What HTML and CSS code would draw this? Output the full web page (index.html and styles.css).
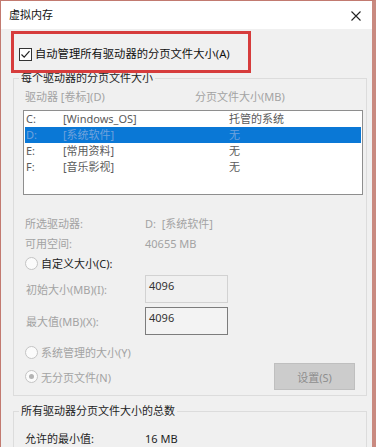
FILE: index.html
```html
<!DOCTYPE html>
<html lang="zh-CN">
<head>
    <meta charset="UTF-8">
    <title>虚拟内存</title>
    <link rel="stylesheet" href="styles.css">
</head>
<body>
    <div class="window">
        <div class="titlebar">
            <span class="title">虚拟内存</span>
            <svg class="close" width="10" height="10" viewBox="0 0 10 10">
                <path d="M0.5 0.5 L9.5 9.5 M9.5 0.5 L0.5 9.5" stroke="#222" stroke-width="1.1" fill="none"/>
            </svg>
        </div>
        <div class="content">
            <!-- highlighted option -->
            <div class="auto-box">
                <span class="checkbox">
                    <svg width="13" height="13" viewBox="0 0 13 13">
                        <rect x="0.5" y="0.5" width="12" height="12" fill="#fff" stroke="#333"/>
                        <path d="M2.5 6.5 L5.2 9.2 L10.5 3.2" stroke="#222" stroke-width="1.2" fill="none"/>
                    </svg>
                </span>
                <span class="auto-label">自动管理所有驱动器的分页文件大小(A)</span>
            </div>

            <fieldset class="group group-drives">
                <legend>每个驱动器的分页文件大小</legend>
                <div class="list-head">
                    <span class="col-drive">驱动器 [卷标](D)</span>
                    <span class="col-size">分页文件大小(MB)</span>
                </div>
                <div class="drive-list">
                    <div class="drive-row"><span class="d-letter">C:</span><span class="d-label">[Windows_OS]</span><span class="d-size">托管的系统</span></div>
                    <div class="drive-row selected"><span class="d-letter">D:</span><span class="d-label">[系统软件]</span><span class="d-size">无</span></div>
                    <div class="drive-row"><span class="d-letter">E:</span><span class="d-label">[常用资料]</span><span class="d-size">无</span></div>
                    <div class="drive-row"><span class="d-letter">F:</span><span class="d-label">[音乐影视]</span><span class="d-size">无</span></div>
                </div>

                <div class="info first">
                    <span class="info-label">所选驱动器:</span>
                    <span class="info-value">D:&nbsp; [系统软件]</span>
                </div>
                <div class="info">
                    <span class="info-label">可用空间:</span>
                    <span class="info-value">40655 MB</span>
                </div>

                <div class="radio-row custom">
                    <span class="radio"></span>
                    <span class="radio-text dark">自定义大小(C):</span>
                </div>
                <div class="field-row">
                    <span class="field-label">初始大小(MB)(I):</span>
                    <div class="field">4096</div>
                </div>
                <div class="field-row second">
                    <span class="field-label">最大值(MB)(X):</span>
                    <div class="field focus">4096</div>
                </div>

                <div class="radio-row system">
                    <span class="radio"></span>
                    <span class="radio-text">系统管理的大小(Y)</span>
                </div>
                <div class="radio-row none">
                    <span class="radio checked"></span>
                    <span class="radio-text">无分页文件(N)</span>
                    <button class="set-btn" disabled>设置(S)</button>
                </div>
            </fieldset>

            <fieldset class="group group-total">
                <legend>所有驱动器分页文件大小的总数</legend>
                <div class="info total">
                    <span class="info-label">允许的最小值:</span>
                    <span class="info-value">16 MB</span>
                </div>
            </fieldset>
        </div>
    </div>
</body>
</html>
```

FILE: styles.css
```css
body {
    margin: 0;
    padding: 0;
    font-family: "Noto Sans", "Noto Sans CJK SC", sans-serif;
    font-size: 11px;
    color: #1e1e1e;
    background-color: #f0f0f0;
}
.window {
    width: 371px;
    height: 446px;
    border-top: 1px solid #c27a70;
    border-left: 1px solid #c27a70;
    border-right: 4px solid #c98a80;
    background-color: #f0f0f0;
    overflow: hidden;
}
.titlebar {
    height: 28px;
    background-color: #fff;
    display: flex;
    align-items: center;
    justify-content: space-between;
    padding: 0 11px 0 8px;
}
.title {
    font-size: 11px;
    line-height: 14px;
    color: #111;
}
.close {
    margin-top: 1px;
}
.content {
    padding: 2px 0 0 10px;
}
.auto-box {
    position: relative;
    z-index: 1;
    width: 229px;
    border: 3px solid #d63c3c;
    display: flex;
    align-items: center;
    padding-left: 5px;
    padding-top: 4px;
    box-sizing: content-box;
    height: 32px;
}
.checkbox {
    display: flex;
    margin-right: 3px;
}
.auto-label {
    font-size: 11.3px;
    line-height: 14px;
    color: #111;
}
.group {
    margin: 0 0 0 2px;
    padding: 0 0 0 9px;
    border: 1px solid #dcdcdc;
    box-sizing: border-box;
    width: 354px;
}
.group legend {
    padding: 0 2px;
    margin-left: -4px;
    line-height: 12px;
    color: #1e1e1e;
}
.group-drives {
    margin-top: -1px;
    padding-top: 5px;
    padding-bottom: 5px;
}
.list-head {
    display: flex;
    line-height: 16px;
    color: #a3a3a3;
    padding-left: 2px;
}
.col-drive {
    width: 170px;
}
.drive-list {
    margin-top: 5px;
    width: 340px;
    height: 85px;
    box-sizing: border-box;
    border: 1px solid #8e8e8e;
    background-color: #fff;
    padding: 0 1px;
}
.drive-row {
    display: flex;
    height: 16px;
    line-height: 16px;
    color: #5a5a5a;
}
.drive-row.selected {
    background-color: #0a78d6;
    color: #6fa2dc;
}
.d-letter {
    width: 37px;
    padding-left: 1px;
}
.d-label {
    width: 166px;
}
.info {
    display: flex;
    line-height: 20px;
    color: #a3a3a3;
    padding-left: 2px;
}
.info.first {
    margin-top: 19px;
}
.info-label {
    width: 120px;
}
.radio-row {
    display: flex;
    align-items: center;
    height: 20px;
    color: #a3a3a3;
    padding-left: 2px;
}
.radio-row.custom {
    margin-top: -1px;
}
.radio {
    width: 11px;
    height: 11px;
    border: 1px solid #c4c4c4;
    border-radius: 50%;
    background-color: #fbfbfb;
    margin-right: 3px;
    display: flex;
    align-items: center;
    justify-content: center;
}
.radio.checked::after {
    content: "";
    width: 5px;
    height: 5px;
    border-radius: 50%;
    background-color: #b4b4b4;
}
.radio-text.dark {
    color: #222;
}
.field-row {
    display: flex;
    align-items: center;
    margin-top: 2px;
    padding-left: 3px;
    color: #a3a3a3;
}
.field-row.second {
    margin-top: 4px;
}
.field-label {
    width: 119px;
}
.field {
    width: 83px;
    height: 28px;
    box-sizing: border-box;
    border: 1px solid #d2d2d2;
    background-color: #f0f0f0;
    color: #333;
    line-height: 18px;
    padding: 1px 0 0 3px;
}
.field.focus {
    border-color: #7c7c7c;
    background-color: #f3f3f3;
}
.radio-row.system {
    margin-top: 7px;
}
.radio-row.none {
    margin-top: 1px;
    height: 27px;
}
.set-btn {
    margin-left: auto;
    margin-right: 11px;
    width: 81px;
    height: 27px;
    background-color: #cccccc;
    border: 1px solid #bfbfbf;
    color: #8e8e8e;
    font-family: "Noto Sans", "Noto Sans CJK SC", sans-serif;
    font-size: 11px;
    padding: 0;
}
.group-total {
    margin-top: 9px;
    padding-top: 12px;
    height: 60px;
}
.info.total {
    color: #1e1e1e;
}
```
